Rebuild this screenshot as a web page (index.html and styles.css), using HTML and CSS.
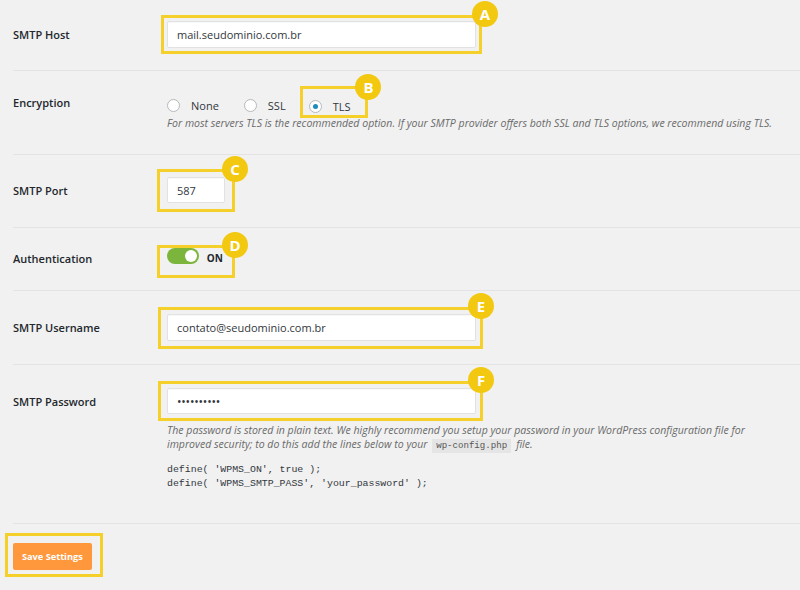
FILE: index.html
```html
<!DOCTYPE html>
<html lang="en">
<head>
    <meta charset="UTF-8">
    <title>SMTP Settings</title>
    <link rel="stylesheet" href="styles.css">
</head>
<body>
    <div class="settings">
        <div class="row row-host">
            <div class="label">SMTP Host</div>
            <div class="field">
                <span class="mark mark-host">
                    <input class="text wide" type="text" value="mail.seudominio.com.br">
                    <span class="hl"><span class="badge">A</span></span>
                </span>
            </div>
        </div>

        <div class="row row-enc">
            <div class="label">Encryption</div>
            <div class="field">
                <div class="radios">
                    <label class="radio"><span class="dot"></span>None</label>
                    <label class="radio"><span class="dot"></span>SSL</label>
                    <span class="mark mark-tls">
                        <label class="radio"><span class="dot checked"></span>TLS</label>
                        <span class="hl"><span class="badge">B</span></span>
                    </span>
                </div>
                <p class="desc">For most servers TLS is the recommended option. If your SMTP provider offers both SSL and TLS options, we recommend using TLS.</p>
            </div>
        </div>

        <div class="row row-port">
            <div class="label">SMTP Port</div>
            <div class="field">
                <span class="mark mark-port">
                    <input class="text small" type="text" value="587">
                    <span class="hl"><span class="badge">C</span></span>
                </span>
            </div>
        </div>

        <div class="row row-auth">
            <div class="label">Authentication</div>
            <div class="field">
                <span class="mark mark-auth">
                    <span class="toggle"><span class="knob"></span></span>
                    <span class="toggle-text">ON</span>
                    <span class="hl"><span class="badge">D</span></span>
                </span>
            </div>
        </div>

        <div class="row row-user">
            <div class="label">SMTP Username</div>
            <div class="field">
                <span class="mark mark-user">
                    <input class="text wide" type="text" value="contato@seudominio.com.br">
                    <span class="hl"><span class="badge">E</span></span>
                </span>
            </div>
        </div>

        <div class="row row-pass">
            <div class="label">SMTP Password</div>
            <div class="field">
                <span class="mark mark-pass">
                    <input class="text wide" type="password" value="1234567890">
                    <span class="hl"><span class="badge">F</span></span>
                </span>
                <p class="desc pass-desc">The password is stored in plain text. We highly recommend you setup your password in your WordPress configuration file for improved security; to do this add the lines below to your <code>wp-config.php</code><span class="after-code">file.</span></p>
                <pre class="snippet">define( 'WPMS_ON', true );
define( 'WPMS_SMTP_PASS', 'your_password' );</pre>
            </div>
        </div>

        <div class="submit">
            <span class="mark mark-save">
                <button class="save">Save Settings</button>
                <span class="hl"></span>
            </span>
        </div>
    </div>
</body>
</html>
```

FILE: styles.css
```css
body {
    margin: 0;
    background: #f1f1f1;
    font-family: "Open Sans", "Noto Sans", sans-serif;
    font-size: 11px;
    color: #32373c;
}
.settings {
    padding-left: 13px;
}
.row {
    display: grid;
    grid-template-columns: 154px 1fr;
    border-bottom: 1px solid #e3e3e3;
}
.label {
    font-weight: 600;
    color: #23282d;
    line-height: 27px;
}
.row-host { padding: 21px 0 22px; }
.row-enc { padding: 23px 0 23px; }
.row-port { padding: 22px 0 23px; }
.row-auth { padding: 20px 0 20px; }
.row-user { padding: 23px 0 23px; }
.row-pass { padding: 23px 0 22px; }

.row-enc .label { line-height: 18px; }
.row-auth .label { line-height: 22px; }

/* inputs */
.text {
    box-sizing: border-box;
    height: 27px;
    padding: 0 9px;
    border: 1px solid #e2e2e2;
    border-radius: 2px;
    background: #fff;
    font-family: inherit;
    font-size: 11px;
    color: #32373c;
    box-shadow: inset 0 1px 1px rgba(0,0,0,0.03);
    vertical-align: top;
}
.wide { width: 309px; }
.small { width: 58px; height: 26px; }
input[type=password] { font-size: 12px; letter-spacing: -0.2px; height: 26px; }

/* radios */
.radios {
    display: flex;
    align-items: center;
    height: 18px;
    margin-top: 2px;
}
.radio {
    display: inline-flex;
    align-items: center;
    margin-right: 25px;
    color: #32373c;
}
.radio + .radio { margin-right: 23px; }
.dot {
    box-sizing: border-box;
    width: 13px;
    height: 13px;
    border: 1px solid #b4b9be;
    border-radius: 50%;
    background: #fff;
    margin-right: 11px;
    display: inline-flex;
    align-items: center;
    justify-content: center;
}
.dot.checked::after {
    content: "";
    width: 5px;
    height: 5px;
    border-radius: 50%;
    background: #1e8cbe;
}
.mark-tls .radio { margin-right: 0; }

.desc {
    margin: 2px 0 0;
    font-style: italic;
    font-size: 10.55px;
    line-height: 15px;
    color: #6a6a6a;
}
.pass-desc { margin-top: 9px; width: 610px; line-height: 14px; }
.desc code {
    display: inline-block;
    font-family: "Liberation Mono", monospace;
    font-style: normal;
    font-size: 9.1px;
    line-height: 14px;
    background: #e5e5e5;
    padding: 0 4px;
    margin-left: 2px;
    color: #555;
}
.after-code {
    margin-left: 5px;
}
.snippet {
    margin: 10px 0 11px;
    font-family: "Liberation Mono", monospace;
    font-size: 9.9px;
    line-height: 13.5px;
    color: #32373c;
}

/* toggle */
.mark-auth {
    display: inline-flex;
    align-items: center;
    height: 22px;
}
.toggle {
    width: 32px;
    height: 16px;
    border-radius: 8px;
    background: #7cb53c;
    display: inline-flex;
    align-items: center;
    justify-content: flex-end;
    padding-right: 2px;
    box-sizing: border-box;
}
.knob {
    width: 12px;
    height: 12px;
    border-radius: 50%;
    background: #fff;
}
.toggle-text {
    margin-left: 5px;
    font-weight: 700;
    font-size: 10px;
    color: #23282d;
}

/* submit */
.submit {
    padding: 19px 0 20px;
}
.save {
    height: 27px;
    padding: 0 9px;
    border: 0;
    border-radius: 2px;
    background: #ff983d;
    color: #fff;
    font-family: inherit;
    font-size: 9.2px;
    font-weight: 700;
}

/* yellow annotation overlays */
.mark {
    position: relative;
    display: inline-block;
}
.hl {
    position: absolute;
    border: 3px solid #f5d02a;
    pointer-events: none;
}
.badge {
    position: absolute;
    top: -16px;
    right: -16px;
    width: 26px;
    height: 26px;
    border-radius: 50%;
    background: #f3c811;
    color: #fff;
    font-weight: 700;
    font-size: 15px;
    line-height: 26px;
    text-align: center;
}
.mark-host .hl { inset: -6px -6px -6px -6px; }
.mark-host .badge { top: -17px; right: -19px; }
.mark-tls .hl { top: -11px; bottom: -4px; left: -9px; right: -18px; }
.mark-tls .badge { top: -15px; right: -16px; }
.mark-port .hl { top: -8px; bottom: -9px; left: -10px; right: -10px; }
.mark-auth .hl { top: -3px; bottom: -8px; left: -10px; right: -12px; }
.mark-user .hl { top: -7px; bottom: -8px; left: -9px; right: -7px; }
.mark-user .badge { top: -17px; right: -14px; }
.mark-pass .hl { top: -7px; bottom: -7px; left: -9px; right: -7px; }
.mark-pass .badge { top: -17px; right: -14px; }
.mark-save .hl { top: -10px; bottom: -7px; left: -8px; right: -11px; }
```
